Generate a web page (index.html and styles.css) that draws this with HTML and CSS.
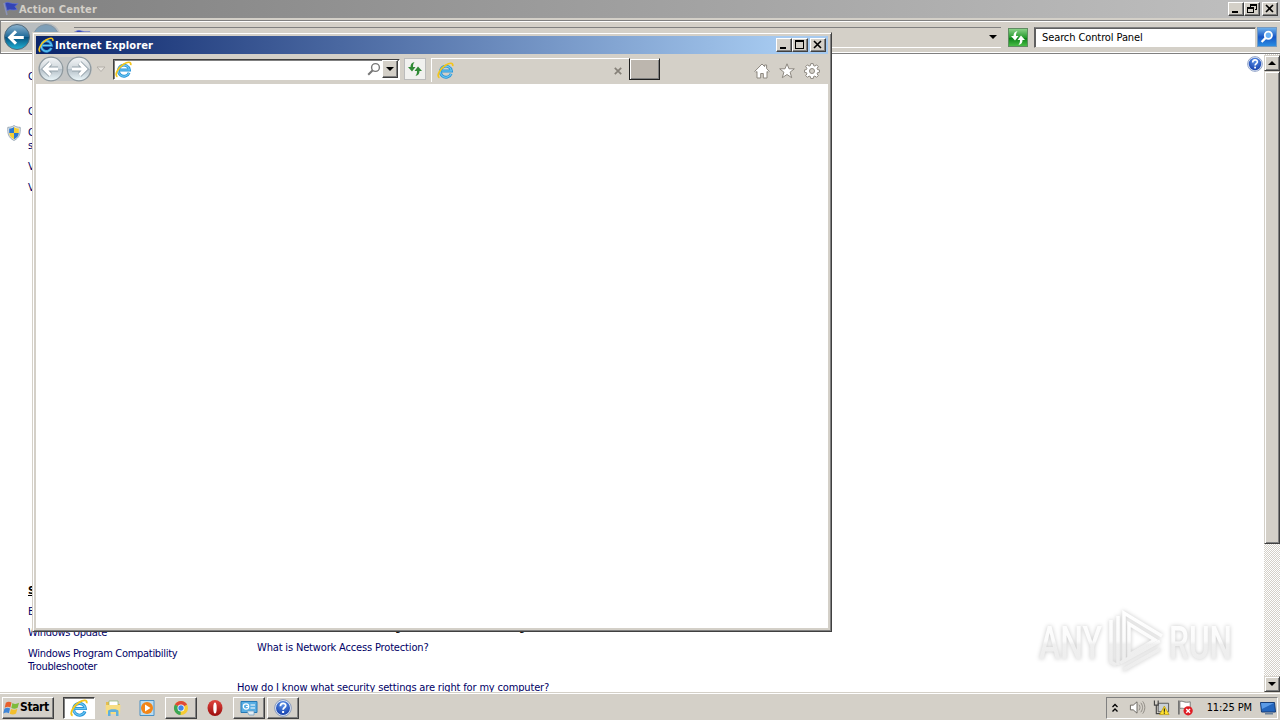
FILE: index.html
```
<!DOCTYPE html>
<html lang="en">
<head>
  <meta charset="UTF-8" />
  <meta name="viewport" content="width=device-width,initial-scale=1.0" />
  <title>Action Center</title>
  <link rel="stylesheet" href="styles.css">
</head>
<body>
  <!-- shared icons -->
  <svg class="defs" width="0" height="0">
    <defs>
      <linearGradient id="teal" x1="0" y1="0" x2="0" y2="1">
        <stop offset="0" stop-color="#8fb4cf"/><stop offset=".48" stop-color="#226c9b"/><stop offset=".52" stop-color="#07527f"/><stop offset="1" stop-color="#22b5d8"/>
      </linearGradient>
      <linearGradient id="glass" x1="0" y1="0" x2="0" y2="1">
        <stop offset="0" stop-color="#f4f6f7"/><stop offset=".48" stop-color="#d0d7dc"/><stop offset=".52" stop-color="#b5c0c8"/><stop offset="1" stop-color="#edf8fb"/>
      </linearGradient>
      <radialGradient id="blueBall" cx=".5" cy=".25" r=".8">
        <stop offset="0" stop-color="#5c92e8"/><stop offset="1" stop-color="#123ba9"/>
      </radialGradient>
      <linearGradient id="red" x1="0" y1="0" x2="0" y2="1">
        <stop offset="0" stop-color="#e0463f"/><stop offset="1" stop-color="#9b0b0b"/>
      </linearGradient>
      <linearGradient id="mark" gradientUnits="userSpaceOnUse" x1="0" y1="8" x2="0" y2="66">
        <stop offset="0" stop-color="#fff"/><stop offset=".5" stop-color="#fbfbfb"/><stop offset=".56" stop-color="#efefef"/><stop offset="1" stop-color="#ededed"/>
      </linearGradient>
    </defs>
    <symbol id="ie" viewBox="0 0 16 16">
      <path d="M13.300 11A5.200 5.200 0 1 1 13.600 8.500H4.600" fill="none" stroke="#2a95d8" stroke-width="2.700"/>
      <path d="M13.300 11A5.200 5.200 0 1 1 13.600 8.500H4.600" fill="none" stroke="#6fcaf3" stroke-width="1"/>
      <path d="M2.300 14.800C-.8 13.200 2.800 6.300 8 3c3.900-2.400 7.400-2.700 6.800.8" fill="none" stroke="#f3c51b" stroke-width="1.600"/>
    </symbol>
    <symbol id="help" viewBox="0 0 18 18">
      <circle cx="9" cy="9" r="8.300" fill="#e6edf8" stroke="#6f86b5" stroke-width=".8"/>
      <circle cx="9" cy="9" r="7" fill="url(#blueBall)"/>
      <path d="M6.400 7.200C6.400 3.400 11.800 3.500 11.700 6.700 11.600 8.500 9.100 8.600 9.100 10.800" fill="none" stroke="#fff" stroke-width="1.800"/>
      <rect x="8.100" y="12" width="2" height="2" fill="#fff"/>
    </symbol>
    <symbol id="flag" viewBox="0 0 16 16">
      <path d="M1 2l3 12" stroke="#8992b5" stroke-width="1.500"/>
      <path d="M2 2c4-2 5 1.500 13 .5l-3 3 2 3c-5 1.500-6-1-10 1z" fill="#3344b5" stroke="#6474d4" stroke-width=".7"/>
    </symbol>
    <symbol id="swap" viewBox="0 0 16 16">
      <path d="M7.500 1C4.500 1.500 3.500 3.500 3.500 6H1l4 4.500L8.500 6H6c0-2 .3-3.500 1.500-5zM8.500 15c3-.5 4-2.500 4-5H15l-4-4.500L7.500 10H10c0 2-.3 3.500-1.500 5z"/>
    </symbol>
    <symbol id="arrow" viewBox="0 0 24 24">
      <path d="M11.500 6L5.500 12l6 6M6 12h13" fill="none"/>
    </symbol>
  </svg>

  <div class="desktop">
    <!-- Control Panel -->
    <div class="panel">
      <div class="panel-title">
        <svg class="title-flag"><use href="#flag"/></svg>
        <span class="title-text">Action Center</span>
        <div class="caption">
          <span class="cap"><svg viewBox="0 0 14 12"><path d="M3 8h6v2H3z"/></svg></span>
          <span class="cap"><svg viewBox="0 0 14 12"><path d="M5 1h7v6h-2V6h1V3H6v1H5zM2 4h7v6H2zM3 6v3h5V6z" fill-rule="evenodd"/></svg></span>
          <span class="cap cap-close"><svg viewBox="0 0 14 12"><path d="M3 2l7 7M10 2L3 9" stroke="#000" stroke-width="1.600"/></svg></span>
        </div>
      </div>
      <div class="panel-nav">
        <svg class="nav-balls" viewBox="0 0 60 30">
          <rect x="2" y="1" width="55" height="27" rx="13" fill="#b9bdbf"/>
          <circle cx="14" cy="15" r="12.500" fill="url(#teal)" stroke="#52697a"/>
          <use href="#arrow" x="1" y="3" width="25" height="25" stroke="#fff" stroke-width="3"/>
          <circle cx="43" cy="15" r="12.500" fill="#7e9fb8" stroke="#8193a1"/>
        </svg>
        <div class="crumbs">
          <svg class="crumb-flag"><use href="#flag"/></svg>
          <span class="crumb-text">Control Panel ▸ All Control Panel Items ▸ Action Center</span>
          <span class="down-arrow"></span>
        </div>
        <div class="green-btn"><svg><use href="#swap"/></svg></div>
        <div class="search">Search Control Panel</div>
        <div class="search-btn">
          <svg viewBox="0 0 18 20"><circle cx="10.500" cy="8" r="4" fill="#6ab1f5" stroke="#fff" stroke-width="2"/><path d="M7.500 11L3 15.500" stroke="#fff" stroke-width="2.500"/></svg>
        </div>
      </div>
      <div class="panel-body">
        <div class="side">
          <a class="link home">Control Panel Home</a>
          <a class="link">Change Action Center settings</a>
          <a class="link shielded">
            <svg class="shield" viewBox="0 0 14 16">
              <path d="M7 .5C5 2 3 2.300.8 2.300.5 8 1 12.500 7 15.500c6-3 6.500-7.500 6.200-13.200C11 2.300 9 2 7 .5z" fill="#dfe6ec" stroke="#8a9aa8" stroke-width=".8"/>
              <path d="M7 2C5.500 3 4 3.500 2.200 3.600V8H7z" fill="#2b78cf"/><path d="M7 2c1.500 1 3 1.500 4.800 1.600V8H7z" fill="#f5cf35"/>
              <path d="M2.200 8C2.500 11 4 12.800 7 14.200V8z" fill="#f5cf35"/><path d="M11.800 8c-.3 3-1.800 4.800-4.800 6.200V8z" fill="#2b78cf"/>
            </svg>
            Change User Account Control<br>settings</a>
          <a class="link">View archived messages</a>
          <a class="link">View performance information</a>
          <div class="see-also">
            <b class="see-head">See also</b>
            <a class="link">Backup and Restore</a>
            <a class="link">Windows Update</a>
            <a class="link">Windows Program Compatibility<br>Troubleshooter</a>
          </div>
        </div>
        <div class="main">
          <div class="main-head">Network Access Protection agent service is not running</div>
          <a class="link nap">What is Network Access Protection?</a>
          <a class="link how">How do I know what security settings are right for my computer?</a>
        </div>
        <svg class="page-help"><use href="#help"/></svg>
        <div class="scroll">
          <span class="scroll-btn"><i class="tri up"></i></span>
          <span class="thumb"></span>
          <span class="scroll-btn last"><i class="tri"></i></span>
        </div>
      </div>
    </div>

    <!-- Internet Explorer -->
    <div class="ie">
      <div class="ie-title">
        <svg class="ie-icon"><use href="#ie"/></svg>
        <span class="title-text">Internet Explorer</span>
        <div class="caption">
          <span class="cap"><svg viewBox="0 0 14 12"><path d="M3 8h6v2H3z"/></svg></span>
          <span class="cap"><svg viewBox="0 0 14 12"><path d="M2 1h9v9H2zM3 3v6h7V3z" fill-rule="evenodd"/></svg></span>
          <span class="cap cap-close"><svg viewBox="0 0 14 12"><path d="M3 2l7 7M10 2L3 9" stroke="#000" stroke-width="1.600"/></svg></span>
        </div>
      </div>
      <div class="ie-bar">
        <svg class="ie-balls" viewBox="0 0 70 26">
          <rect x="2" y="1" width="54" height="24" rx="12" fill="#c3c5c5"/>
          <circle cx="15" cy="13" r="11.800" fill="url(#glass)" stroke="#8d989e" stroke-width="1.200"/>
          <circle cx="43" cy="13" r="11.800" fill="url(#glass)" stroke="#8d989e" stroke-width="1.200"/>
          <g id="glassArrow">
            <use href="#arrow" x="3" y="1" width="24" height="24" stroke="#93a1aa" stroke-width="5"/>
            <use href="#arrow" x="3" y="1" width="24" height="24" stroke="#fff" stroke-width="3.200"/>
          </g>
          <use href="#glassArrow" transform="matrix(-1 0 0 1 58 0)"/>
          <path d="M61 11h8l-4 4.500z" fill="#e8e5df" stroke="#aaa69f" stroke-width=".8"/>
        </svg>
        <div class="address">
          <svg class="addr-icon"><use href="#ie"/></svg>
          <svg class="lens" viewBox="0 0 14 14"><circle cx="8.500" cy="5.500" r="3.900" fill="none" stroke="#777" stroke-width="1.400"/><path d="M5.700 8.300L1.200 12.800" stroke="#777" stroke-width="2"/></svg>
          <span class="drop"><i class="tri"></i></span>
        </div>
        <div class="refresh"><svg><use href="#swap"/></svg></div>
        <div class="tab">
          <svg class="tab-icon"><use href="#ie"/></svg>
          <svg class="tab-x" viewBox="0 0 8 8"><path d="M.8.8l6.400 6.400M7.200.8L.8 7.200" stroke="#858078" stroke-width="1.700"/></svg>
        </div>
        <div class="new-tab"></div>
        <div class="tools">
          <svg viewBox="0 0 16 16"><path d="M8 1L.8 8.300l1.100 1.100L3 8.500V15h3.700v-4.500h2.600V15H13V8.500l1.100.9 1.100-1.100L12.600 5.600V2h-2v1.600z" fill="#fff" stroke="#8c877f"/></svg>
          <svg viewBox="0 0 16 16"><path d="M8 .8l2 5h5.300l-4.200 3.400 1.600 5.500L8 11.500l-4.700 3.200 1.600-5.500L.7 5.800H6z" fill="#fff" stroke="#8c877f"/></svg>
          <svg viewBox="0 0 16 16"><path d="M6.800.6h2.400l.4 2 1.300.5 1.700-1.200 1.700 1.700-1.200 1.700.5 1.300 2 .4v2.200l-2 .4-.5 1.300 1.200 1.700-1.700 1.700-1.700-1.200-1.300.5-.4 2H6.800l-.4-2-1.300-.5-1.700 1.200-1.700-1.700 1.200-1.700-.5-1.300-2-.4V7l2-.4.5-1.300-1.200-1.700 1.700-1.700 1.700 1.200 1.300-.5z" fill="#fff" stroke="#8c877f"/><circle cx="8" cy="8" r="2.500" fill="#d4d0c8" stroke="#8c877f"/></svg>
        </div>
      </div>
      <div class="ie-page"></div>
    </div>

    <svg class="watermark" viewBox="0 0 210 76">
      <g class="mark-text">
        <text x="9" y="55" textLength="63" lengthAdjust="spacingAndGlyphs">ANY</text>
        <text x="139" y="55" textLength="63" lengthAdjust="spacingAndGlyphs">RUN</text>
      </g>
      <g class="mark-logo">
        <path d="M81 16v42l5 3M88 61V12"/>
        <path d="M94 56V9l38 23"/>
        <path d="M99 20v31l26-15z"/>
        <path d="M90 59l40-22M93 66l37-21"/>
      </g>
    </svg>

    <!-- Taskbar -->
    <div class="taskbar">
      <div class="start">
        <svg viewBox="0 0 18 18">
          <path d="M3 3.500C5 2 7 2 9 3.300L7.800 8.500C6 7.300 4 7.500 1.800 8.700z" fill="#e8602c"/>
          <path d="M10 3.800c2 1.300 4.500 1.200 7-.3l-1.500 5.200c-2.300 1.400-4.500 1.400-6.700.2z" fill="#7dbb3c"/>
          <path d="M1.500 9.800C3.700 8.500 5.700 8.500 7.500 9.600l-1.300 5C4.500 13.500 2.500 13.600.3 14.800z" fill="#3f86d8"/>
          <path d="M8.500 10c2.200 1.200 4.500 1.100 6.700-.2l-1.400 5.100c-2.300 1.400-4.600 1.200-6.600.1z" fill="#f4bf2b"/>
        </svg>
        <b>Start</b>
      </div>
      <div class="task active"><svg><use href="#ie"/></svg></div>
      <div class="task flat">
        <svg viewBox="0 0 18 18"><path d="M2 3h5l1 2h8v10H2z" fill="#e6bd4f"/><path d="M5 2h9v5H5z" fill="#fff" stroke="#8bb56e" stroke-width=".7"/><path d="M1.500 6h15l-.5 9H2z" fill="#f7dd82"/><path d="M4 17v-5c0-2.500 10.500-2.500 10.500 0v5H12v-4H6.500v4z" fill="#5fb0dc"/></svg>
      </div>
      <div class="task flat">
        <svg viewBox="0 0 18 18"><path d="M2 1.500h14v15H2z" fill="#b9dcf2" stroke="#4a91c5"/><circle cx="9" cy="9" r="6" fill="#f28518"/><path d="M7 5.500v7L12.500 9z" fill="#fff"/></svg>
      </div>
      <div class="task">
        <svg viewBox="0 0 18 18"><circle cx="9" cy="9" r="7" fill="#f6cb32"/><path d="M9 9L2.900 5.500A7 7 0 0 1 15.100 5.500z" fill="#df4938"/><path d="M9 9L2.900 5.500A7 7 0 0 0 8.500 16z" fill="#3aa656"/><circle cx="9" cy="9" r="3.500" fill="#fff"/><circle cx="9" cy="9" r="2.700" fill="#4285e8"/></svg>
      </div>
      <div class="task flat">
        <svg viewBox="0 0 18 18"><ellipse cx="9" cy="9" rx="7.500" ry="8" fill="url(#red)"/><ellipse cx="9" cy="9" rx="1.700" ry="5.500" fill="#fff"/></svg>
      </div>
      <div class="task">
        <svg viewBox="0 0 18 18"><path d="M1 2.500h16v11H1z" fill="#58aee3" stroke="#2679b5"/><circle cx="6" cy="7.500" r="2.700" fill="none" stroke="#fff" stroke-width="1.200"/><path d="M6 7.500h2.500M10.500 6h4.500M10.500 9h4.500" stroke="#fff" stroke-width="1.200"/><path d="M7 12h7v4H9z" fill="#e3edf4" stroke="#6a9bbd" stroke-width=".7"/></svg>
      </div>
      <div class="task"><svg><use href="#help"/></svg></div>

      <div class="tray">
        <svg class="chev" viewBox="0 0 8 12"><path d="M1.500 5L4 2.500 6.500 5M1.500 9.500L4 7l2.500 2.500" fill="none" stroke="#000" stroke-width="1.300"/></svg>
        <svg viewBox="0 0 18 18"><path d="M1.500 6.500h3L8.500 3v12l-4-3.500h-3z" fill="#fff" stroke="#69655f"/><path d="M10.500 6c1.500 2 1.500 4 0 6M12.500 4c2.500 3.500 2.500 6.500 0 10M14.500 2.500c3 4 3 9 0 13" fill="none" stroke="#8c8882"/></svg>
        <svg viewBox="0 0 18 18"><path d="M5.500 4.500h11v9h-11z" fill="#c9cfd5" stroke="#555"/><path d="M1.500 1.500v5h4v-5M3.500 7v8.500H10" fill="none" stroke="#444" stroke-width="1.200"/><path d="M12 7.500l5 9H7z" fill="#ffe12d" stroke="#b89500" stroke-width=".7"/><path d="M12 10v3.500M12 14.300v1.200" stroke="#222" stroke-width="1.200"/></svg>
        <svg viewBox="0 0 18 18"><path d="M2 1.500v15" stroke="#666" stroke-width="1.600"/><path d="M3 2.500c4-1 4 2 11 .5v7c-6 1.500-7-1-11 0z" fill="#fff" stroke="#777"/><circle cx="11.800" cy="12.500" r="4.900" fill="#df1d24"/><path d="M9.800 10.500l4 4M13.800 10.500l-4 4" stroke="#fff" stroke-width="1.500"/></svg>
        <span class="clock">11:25 PM</span>
        <svg class="show-desktop" viewBox="0 0 16 14"><path d="M.5 1.500h14l1 9.500H1.500z" fill="#2466bd" stroke="#163d77"/><path d="M1 2h13L2 8z" fill="#5b9be6"/><path d="M5 12h8v1.500H5z" fill="#69809a"/></svg>
      </div>
    </div>
  </div>
</body>
</html>
```
FILE: styles.css
```
html,body{margin:0;width:1280px;height:720px;overflow:hidden;background:#fff}
* { box-sizing: border-box; }
body {
  font-family: "DejaVu Sans Condensed", "DejaVu Sans", sans-serif;
  font-stretch: condensed;
  font-size: 11px;
  line-height: 13px;
  color: #000;
}
svg { display: block; flex: none; }
.defs { position: absolute; }
.desktop {
  position: relative;
  display: flex;
  flex-direction: column;
  width: 1280px;
  height: 720px;
}

/* Control Panel window */
.panel {
  height: 692px;
  display: flex;
  flex-direction: column;
  overflow: hidden;
}
.panel-title {
  height: 18px;
  flex: none;
  display: flex;
  align-items: center;
  padding: 0 2px 0 3px;
  background: linear-gradient(90deg, #808080, #c0c0c0);
  color: #d4d0c8;
}
.title-flag { width: 16px; height: 16px; }
.title-text {
  font-weight: bold;
  letter-spacing: 0.13px;
  white-space: nowrap;
}
.caption { display: flex; margin-left: auto; }
.cap {
  width: 16px;
  height: 14px;
  background: #d4d0c8;
  border: 1px solid;
  border-color: #fff #404040 #404040 #fff;
  box-shadow: inset -1px -1px #808080;
}
.cap svg { width: 14px; height: 12px; }
.cap-close { margin-left: 2px; }
.panel-nav {
  height: 36px;
  flex: none;
  display: flex;
  align-items: center;
  padding: 1px 2px 0 3px;
  background: #d4d0c8;
  border-top: 2px solid #d4d0c8;
  border-bottom: 1px solid #808080;
  box-shadow: inset 0 1px #808080, inset 1px 0 #808080, inset 0 2px #fff, inset 0 -1px #fff;
}
.nav-balls { width: 60px; height: 30px; }
.crumbs {
  width: 927px;
  height: 21px;
  margin-left: 11px;
  padding-right: 4px;
  display: flex;
  align-items: center;
  border-top: 1px solid #808080;
  border-bottom: 1px solid #fff;
}
.crumb-flag { width: 17px; height: 17px; }
.crumb-text { margin: 0 0 2px 16px; white-space: nowrap; }
.down-arrow {
  margin-left: auto;
  border: 4px solid transparent;
  border-top-color: #000;
  border-bottom: 0;
}
.green-btn {
  width: 20px;
  height: 19px;
  margin-left: 7px;
  padding: 1px;
  background: linear-gradient(#8bd188, #259b2d 50%, #087d15 51%, #48bd45);
  border: 1px solid #608c62;
}
.green-btn svg { width: 16px; height: 16px; fill: #fff; }
.search {
  width: 222px;
  height: 21px;
  margin-left: 6px;
  padding: 3px 7px;
  background: #fff;
  border: 1px solid;
  border-color: #808080 #d4d0c8 #d4d0c8 #606060;
  box-shadow: inset 1px 1px #606060;
  letter-spacing: -0.1px;
}
.search-btn {
  width: 20px;
  height: 20px;
  margin-left: 1px;
  background: linear-gradient(#6eb0ea, #1756c5 50%, #2a8de2);
  border: 1px solid #759ac2;
}
.search-btn svg { width: 18px; height: 18px; }

.panel-body {
  flex: 1;
  min-height: 0;
  display: flex;
  background: #fff;
}
.side {
  width: 237px;
  flex: none;
  display: flex;
  flex-direction: column;
  gap: 8px;
  padding: 16px 0 0 28px;
}
.link { color: #000066; white-space: nowrap; letter-spacing: -0.16px; }
.side .link { letter-spacing: -0.3px; }
.home { margin-bottom: 14px; }
.shielded { position: relative; }
.shield {
  position: absolute;
  left: -21px;
  top: -1px;
  width: 14px;
  height: 16px;
}
.see-also {
  display: flex;
  flex-direction: column;
  gap: 8px;
  margin-top: 382px;
}
.see-head { text-decoration: underline; }
.main { flex: 1; display: flex; flex-direction: column; padding-top: 567px; }
.main-head { padding-left: 20px; letter-spacing: -0.1px; }
.nap { margin: 7px 0 0 20px; }
.how { margin-top: 27px; }
.page-help { width: 16px; height: 16px; margin: 2px 1px 0 0; }
.scroll {
  width: 16px;
  flex: none;
  padding-top: 1px;
  display: flex;
  flex-direction: column;
  background: repeating-conic-gradient(#d4d0c8 0 25%, #fff 0 50%) 0 0 / 2px 2px;
}
.scroll-btn, .thumb {
  height: 16px;
  background: #d4d0c8;
  border: 1px solid;
  border-color: #d4d0c8 #404040 #404040 #d4d0c8;
  box-shadow: inset 1px 1px #fff, inset -1px -1px #808080;
}
.scroll-btn { display: flex; align-items: center; justify-content: center; }
.thumb { height: 473px; }
.last { margin-top: auto; }
.tri {
  border: 4px solid transparent;
  border-top-color: #000;
  border-bottom: 0;
}
.tri.up { border-top: 0; border-bottom: 4px solid #000; }

/* Internet Explorer window */
.ie {
  position: absolute;
  left: 32px;
  top: 32px;
  width: 800px;
  height: 600px;
  padding: 3px;
  display: flex;
  flex-direction: column;
  background: #d4d0c8;
  border: 1px solid;
  border-color: #d4d0c8 #404040 #404040 #d4d0c8;
  box-shadow: inset 1px 1px #fff, inset -1px -1px #808080;
}
.ie-title {
  height: 18px;
  flex: none;
  display: flex;
  align-items: center;
  padding: 0 2px;
  background: linear-gradient(90deg, #0a246a, #a6caf0 94%);
  color: #fff;
}
.ie-icon { width: 16px; height: 16px; margin-right: 1px; }
.ie-bar {
  height: 30px;
  flex: none;
  display: flex;
  align-items: center;
}
.ie-balls { width: 70px; height: 26px; }
.address {
  width: 287px;
  height: 21px;
  margin-left: 7px;
  padding: 1px;
  display: flex;
  align-items: center;
  background: #fff;
  border: 1px solid;
  border-color: #404040 #fff #fff #404040;
  box-shadow: inset 1px 1px #808080;
}
.addr-icon { width: 17px; height: 17px; }
.lens { width: 14px; height: 14px; margin-left: auto; }
.drop {
  width: 16px;
  height: 18px;
  margin-left: 1px;
  display: flex;
  align-items: center;
  justify-content: center;
  background: #d4d0c8;
  border: 1px solid;
  border-color: #fff #404040 #404040 #fff;
  box-shadow: inset -1px -1px #808080;
}
.refresh {
  width: 22px;
  height: 22px;
  margin-left: 4px;
  padding: 2px;
  background: #f1f1ef;
  border: 1px solid #bcbcbc;
}
.refresh svg { width: 16px; height: 16px; fill: #2f8a35; }
.tab {
  width: 198px;
  height: 24px;
  align-self: flex-end;
  margin: 0 0 2px 5px;
  padding: 0 7px 0 5px;
  display: flex;
  align-items: center;
  border-top: 1px solid #fff;
  border-left: 1px solid #fff;
}
.tab-icon { width: 17px; height: 17px; }
.tab-x { width: 8px; height: 8px; margin-left: auto; }
.new-tab {
  width: 31px;
  height: 22px;
  background: #bcb6ae;
  border: 1px solid #202020;
  border-top-color: #d4d0c8;
  box-shadow: inset 1px 1px #fff, inset -1px -1px #808080;
}
.tools {
  display: flex;
  gap: 9px;
  margin: 4px 8px 0 auto;
}
.tools svg { width: 16px; height: 16px; }
.ie-page { flex: 1; background: #fff; }

/* ANY.RUN mark */
.watermark {
  position: absolute;
  left: 1030px;
  top: 604px;
  width: 210px;
  height: 76px;
  filter: drop-shadow(0 0 2px rgba(0,0,0,.22));
}
.mark-text {
  font: 500 46px Roboto, sans-serif;
  fill: url(#mark);
}
.mark-logo { fill: none; stroke: url(#mark); stroke-width: 3.5; }

/* Taskbar */
.taskbar {
  height: 28px;
  display: flex;
  align-items: center;
  padding: 3px 2px 1px;
  background: #d4d0c8;
  border-top: 1px solid #d4d0c8;
  box-shadow: inset 0 1px #fff;
}
.start, .task {
  height: 22px;
  display: flex;
  align-items: center;
  border: 1px solid;
  border-color: #fff #404040 #404040 #fff;
  box-shadow: inset -1px -1px #808080;
}
.start { width: 52px; margin-right: 9px; font-size: 12px; letter-spacing: -0.4px; }
.start svg { width: 17px; height: 18px; }
.task { width: 32px; margin-right: 2px; justify-content: center; }
.task svg { width: 18px; height: 18px; }
.active {
  background: #fff;
  border-color: #404040 #fff #fff #404040;
  box-shadow: inset 1px 1px #808080;
}
.flat { border-color: transparent; box-shadow: none; }
.tray {
  width: 172px;
  height: 22px;
  margin-left: auto;
  padding: 0 1px 0 4px;
  display: flex;
  align-items: center;
  border: 1px solid;
  border-color: #808080 #fff #fff #808080;
}
.tray svg { width: 17px; height: 17px; margin-right: 7px; }
.tray .chev { width: 8px; height: 12px; margin-right: 10px; }
.clock { margin-left: auto; white-space: nowrap; letter-spacing: -0.1px; }
.tray .show-desktop { width: 16px; height: 14px; margin: 0 0 0 8px; }
```
